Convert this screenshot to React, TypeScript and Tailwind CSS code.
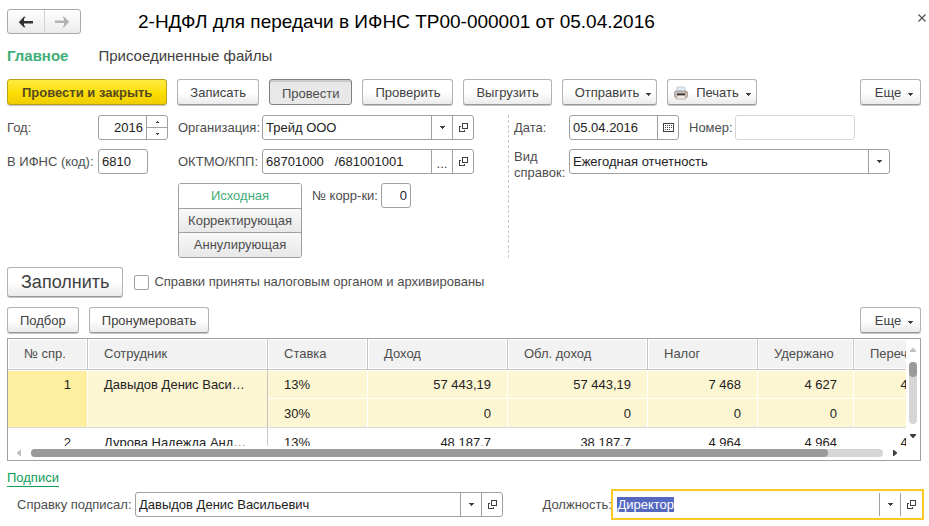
import { useEffect, useRef, type ReactNode } from "react";
import clsx from "clsx";

const BUTTON =
  "flex h-[26px] shrink-0 items-center justify-center rounded-[3px] border border-[#b3b3b3] border-b-[#9a9a9a] bg-linear-to-b from-white from-50% to-[#ebebeb] pt-0.5 whitespace-nowrap text-[#404040] shadow-[0_1px_0_#c4c4c4]";
const FIELD = "flex h-[25px] min-w-0 rounded-[3px] border border-[#a0a0a0] bg-white";
const CELL =
  "flex w-[21px] shrink-0 items-center justify-center border-l border-[#a0a0a0] text-[#404040]";
const INPUT = "h-full w-full min-w-0 bg-transparent px-[3px] text-[#222] outline-none";

function Caret({ className = "" }: { className?: string }) {
  return (
    <svg width="5" height="3" viewBox="0 0 5 3" className={clsx("shrink-0", className)} fill="currentColor" shapeRendering="crispEdges" aria-hidden="true">
      <path d="M0 0h5v1H4v1H3v1H2V2H1V1H0z" />
    </svg>
  );
}

function ScrollArrow({ className = "" }: { className?: string }) {
  return (
    <svg width="6" height="4" viewBox="0 0 6 4" className={clsx("shrink-0", className)} fill="currentColor" aria-hidden="true">
      <path d="M0 0h6v1L3.500 4h-1L0 1z" />
    </svg>
  );
}

function OpenIcon() {
  return (
    <svg width="9" height="9" viewBox="0 0 9 9" fill="none" stroke="currentColor" shapeRendering="crispEdges" aria-hidden="true">
      <path d="M3.5.5h5v5h-5z" />
      <path d="M2 3.5H.5v5h5V7" />
    </svg>
  );
}

function CalendarIcon() {
  return (
    <svg width="11" height="9" viewBox="0 0 11 9" fill="none" stroke="currentColor" shapeRendering="crispEdges" aria-hidden="true">
      <path d="M.5.5h10v8H.5z" />
      <path d="M2 2.500h7M2 4.500h7M2 6.500h5" strokeDasharray="1 1" />
    </svg>
  );
}

function PrinterIcon() {
  return (
    <svg width="14" height="14" viewBox="0 0 14 14" aria-hidden="true">
      <path d="M3 1h7l1 1v4H3z" fill="#dfeaf4" stroke="#a9bccb" strokeWidth=".7" />
      <rect x=".5" y="5" width="13" height="6.5" rx="1.5" fill="#c4bcb8" stroke="#948e8a" strokeWidth=".7" />
      <path d="M3 7.500h8v2H3z" fill="#3a3331" />
      <path d="M3 9.5h8l.5 3.5h-9z" fill="#f2ebe6" stroke="#a79c96" strokeWidth=".7" />
      <path d="M11 6h1.300v1H11z" fill="#d96d3c" />
    </svg>
  );
}

function Arrow({ flip = false }: { flip?: boolean }) {
  return (
    <svg width="14" height="12" viewBox="0 0 14 12" className={flip ? "rotate-180" : ""} fill="currentColor" aria-hidden="true">
      <path d="M0 6l5-5.500V5h9v2.500H5v4L0 6.500z" />
      <path d="M5.200 2.800L6.500 1 5 .4zM5.200 9.200L6.500 11l-1.500.6z" />
    </svg>
  );
}

function Button({ children, menu, className }: { children: ReactNode; menu?: boolean; className?: string }) {
  return (
    <button type="button" className={clsx(BUTTON, menu ? "pr-[5px] pl-3" : "px-3", className)}>
      {children}
      {menu && <Caret className="mt-0.5 ml-[7px]" />}
    </button>
  );
}

function SelectBox({ id, value, open, className }: { id: string; value: string; open?: boolean; className?: string }) {
  return (
    <div className={clsx(FIELD, className)}>
      <div className="grid min-w-0 flex-1 grid-cols-[minmax(0,1fr)_21px]">
        <select id={id} defaultValue={value} className="col-span-2 col-start-1 row-start-1 h-full w-full appearance-none bg-transparent pr-6 pl-[3px] text-[#222] outline-none">
          <option>{value}</option>
        </select>
        <span className={clsx(CELL, "pointer-events-none col-start-2 row-start-1 h-full")}>
          <Caret />
        </span>
      </div>
      {open && (
        <button type="button" aria-label="Открыть" className={CELL}>
          <OpenIcon />
        </button>
      )}
    </div>
  );
}

const HEADERS = ["№ спр.", "Сотрудник", "Ставка", "Доход", "Обл. доход", "Налог", "Удержано", "Перечис"];
const WIDTHS = ["w-[80px]", "w-[180px]", "w-[100px]", "w-[140px]", "w-[140px]", "w-[110px]", "w-[96px]", ""];
const PEOPLE = [
  {
    no: "1",
    name: "Давыдов Денис Васи…",
    selected: true,
    rates: [
      ["13%", "57 443,19", "57 443,19", "7 468", "4 627", "4 627"],
      ["30%", "0", "0", "0", "0", "0"],
    ],
  },
  {
    no: "2",
    name: "Дурова Надежда Анд…",
    selected: false,
    rates: [["13%", "48 187,7", "38 187,7", "4 964", "4 964", "4 964"]],
  },
];

function Employees() {
  return (
    <div className="mt-[5px] border border-[#a0a0a0]">
      <div className="flex">
        <div className="h-[107px] min-w-0 flex-1 overflow-hidden">
          <table className="w-full min-w-[942px] table-fixed border-separate border-spacing-0">
            <thead>
              <tr>
                {HEADERS.map((h, i) => (
                  <th key={h} className={clsx("h-[31px] border-r border-b border-[#c6c6c6] bg-[#f2f2f2] px-4 text-left font-normal text-[#4d4d4d] shadow-[inset_0_0_0_1px_#fff]", WIDTHS[i])}>
                    {h}
                  </th>
                ))}
              </tr>
            </thead>
            <tbody className="text-[#222]">
              {PEOPLE.map((p) =>
                p.rates.map((r, ri) => {
                  const last = ri === p.rates.length - 1;
                  return (
                    <tr key={p.no + r[0]} className={p.selected ? "bg-[#fdf6d2]" : "bg-white"}>
                      {ri === 0 && (
                        <>
                          <td rowSpan={p.rates.length} className={clsx("border-r border-b border-r-white border-b-[#dcdcdc] px-4 pt-[5px] text-right align-top leading-5", p.selected && "bg-[#fdeea0] shadow-[inset_0_1px_0_#fff]")}>
                            {p.no}
                          </td>
                          <td rowSpan={p.rates.length} className={clsx("border-r border-b border-r-[#c6c6c6] border-b-[#dcdcdc] px-4 pt-[5px] align-top leading-5 whitespace-nowrap", p.selected && "shadow-[inset_0_1px_0_#fff]")}>
                            {p.name}
                          </td>
                        </>
                      )}
                      {r.map((v, i) => (
                        <td key={i} className={clsx("h-[29px] border-r border-b border-r-white px-4 pt-[5px] align-top leading-5 whitespace-nowrap", i > 0 && "text-right", last ? "border-b-[#dcdcdc]" : "border-b-white", ri === 0 && "shadow-[inset_0_1px_0_#fff]")}>
                          {v}
                        </td>
                      ))}
                    </tr>
                  );
                }),
              )}
            </tbody>
          </table>
        </div>
        <div className="flex w-[14px] flex-col items-center pt-[9px] pb-[8px]">
          <ScrollArrow className="rotate-180 text-[#c0c0c0]" />
          <div className="mt-[10px] w-2 flex-1 rounded-full bg-[#d6d6d6]">
            <div className="h-[15px] rounded-full bg-[#9a9a9a]" />
          </div>
          <ScrollArrow className="mt-[10px] text-[#404040]" />
        </div>
      </div>
      <div className="flex h-[14px] items-center pr-[22px] pl-[8px]">
        <ScrollArrow className="rotate-90 text-[#c0c0c0]" />
        <div className="mx-[9px] h-2 flex-1 rounded-full bg-[#d6d6d6]">
          <div className="h-2 w-[93.5%] rounded-full bg-[#9a9a9a]" />
        </div>
        <ScrollArrow className="-rotate-90 text-[#404040]" />
      </div>
    </div>
  );
}

export default function App() {
  const post = useRef<HTMLInputElement>(null);
  useEffect(() => {
    post.current?.focus();
    post.current?.select();
  }, []);

  return (
    <main className="bg-white pt-[9px] pr-2 pb-2 pl-[7px] font-['Liberation_Sans',Arial,sans-serif] text-[13px] leading-4 text-[#4d4d4d]">
      <header className="flex h-[25px] items-center">
        <div className="flex h-[25px] w-[74px] rounded-[3px] border border-[#a8a8a8] bg-linear-to-b from-white to-[#ebebeb]">
          <button type="button" aria-label="Назад" className="flex flex-1 items-center justify-center text-[#333]">
            <Arrow />
          </button>
          <button type="button" aria-label="Вперед" className="flex flex-1 items-center justify-center border-l border-[#d2d2d2] text-[#b3b3b3]">
            <Arrow flip />
          </button>
        </div>
        <h1 className="ml-[57px] flex-1 text-[19px] leading-6 whitespace-nowrap text-black">2-НДФЛ для передачи в ИФНС ТР00-000001 от 05.04.2016</h1>
        <button type="button" aria-label="Закрыть" className="-mr-[5px] mb-[7px] text-[#555]">
          <svg width="8" height="8" viewBox="0 0 8 8" fill="none" stroke="currentColor" strokeWidth="1.300" aria-hidden="true">
            <path d="M.5.5l7 7M7.500.5l-7 7" />
          </svg>
        </button>
      </header>

      <nav className="mt-3 flex h-5 items-center gap-[30px] text-[15px] leading-5">
        <a href="#main" className="font-bold text-[#3fae78]">Главное</a>
        <a href="#files" className="text-[#404040]">Присоединенные файлы</a>
      </nav>

      <div className="mt-[13px] flex gap-[10px]">
        <button type="button" className="flex h-[26px] shrink-0 items-center justify-center rounded-[3px] border border-[#b89f1c] bg-linear-to-b from-[#ffea3c] via-[#fddf05] to-[#efcd00] px-[14px] pt-0.5 font-bold whitespace-nowrap text-[#55491f] shadow-[0_1px_0_#c4c4c4]">
          Провести и закрыть
        </button>
        <Button>Записать</Button>
        <button type="button" aria-pressed="true" className="flex h-[26px] shrink-0 items-center justify-center rounded-[3px] border border-[#808080] bg-[#e8e8e8] px-3 pt-[3px] whitespace-nowrap text-[#4d4d4d] shadow-[inset_0_2px_0_#cbcbcb]">
          Провести
        </button>
        <Button>Проверить</Button>
        <Button>Выгрузить</Button>
        <Button menu>Отправить</Button>
        <Button menu>
          <span className="mr-2 -ml-1.5"><PrinterIcon /></span>
          Печать
        </Button>
        <Button menu className="ml-auto w-[61px]">Еще</Button>
      </div>

      <form className="mt-[10px] grid grid-cols-[171px_minmax(0,330fr)_minmax(0,413fr)]">
        <div className="flex flex-col gap-[9px]">
          <div className="flex items-center">
            <label htmlFor="year" className="w-[91px]">Год:</label>
            <div className={clsx(FIELD, "w-[70px]")}>
              <input id="year" defaultValue="2016" className={clsx(INPUT, "text-right")} />
              <div className="flex w-[21px] shrink-0 flex-col border-l border-[#a0a0a0] text-[#404040]">
                <button type="button" aria-label="Больше" className="flex flex-1 items-center justify-center border-b border-[#a0a0a0]">
                  <svg width="3" height="2" viewBox="0 0 3 2" fill="currentColor" shapeRendering="crispEdges"><path d="M1 0h1v1h1v1H0V1h1z" /></svg>
                </button>
                <button type="button" aria-label="Меньше" className="flex flex-1 items-center justify-center">
                  <svg width="3" height="2" viewBox="0 0 3 2" fill="currentColor" shapeRendering="crispEdges"><path d="M0 0h3v1H2v1H1V1H0z" /></svg>
                </button>
              </div>
            </div>
          </div>
          <div className="flex items-center">
            <label htmlFor="ifns" className="w-[91px]">В ИФНС (код):</label>
            <div className={clsx(FIELD, "w-[50px]")}>
              <input id="ifns" defaultValue="6810" className={INPUT} />
            </div>
          </div>
        </div>

        <div className="flex flex-col gap-[9px] pr-[34px]">
          <div className="flex items-center">
            <label htmlFor="org" className="w-[84px] shrink-0">Организация:</label>
            <SelectBox id="org" value="Трейд ООО" open className="flex-1" />
          </div>
          <div className="flex items-center">
            <label htmlFor="oktmo" className="w-[84px] shrink-0">ОКТМО/КПП:</label>
            <div className={clsx(FIELD, "flex-1")}>
              <input id="oktmo" defaultValue={"68701000\u00a0\u00a0\u00a0/681001001"} className={INPUT} />
              <button type="button" aria-label="Выбрать" className={clsx(CELL, "pt-1")}>...</button>
              <button type="button" aria-label="Открыть" className={CELL}>
                <OpenIcon />
              </button>
            </div>
          </div>
          <div className="flex items-start">
            <div className="flex h-[75px] w-[124px] shrink-0 flex-col divide-y divide-[#a0a0a0] overflow-hidden rounded-[3px] border border-[#a0a0a0]">
              <button type="button" aria-pressed="true" className="flex-1 bg-white text-[#3fae78]">Исходная</button>
              <button type="button" className="flex-1 bg-linear-to-b from-[#f8f8f8] to-[#e8e8e8]">Корректирующая</button>
              <button type="button" className="flex-1 bg-linear-to-b from-[#f8f8f8] to-[#e8e8e8]">Аннулирующая</button>
            </div>
            <label htmlFor="corr" className="ml-[10px] w-[69px] shrink-0 leading-[25px] whitespace-nowrap">№ корр-ки:</label>
            <div className={clsx(FIELD, "w-[30px]")}>
              <input id="corr" defaultValue="0" className={clsx(INPUT, "text-right")} />
            </div>
          </div>
        </div>

        <div className="flex flex-col gap-[9px] border-l border-dashed border-[#c8c8c8] pr-[31px] pl-[5px]">
          <div className="flex items-center">
            <label htmlFor="date" className="w-[55px] shrink-0">Дата:</label>
            <div className={clsx(FIELD, "w-[110px]")}>
              <input id="date" defaultValue="05.04.2016" className={INPUT} />
              <button type="button" aria-label="Календарь" className={CELL}>
                <CalendarIcon />
              </button>
            </div>
            <label htmlFor="number" className="ml-[10px] w-[46px] shrink-0">Номер:</label>
            <div className="flex h-[25px] w-[120px] min-w-0 rounded-[3px] border border-[#d6d6d6]">
              <input id="number" defaultValue="" className={INPUT} />
            </div>
          </div>
          <div className="flex items-start">
            <label htmlFor="kind" className="w-[55px] shrink-0">Вид справок:</label>
            <SelectBox id="kind" value="Ежегодная отчетность" className="flex-1" />
          </div>
        </div>
      </form>

      <div className="mt-[9px] flex items-center">
        <button type="button" className="flex h-[30px] shrink-0 items-center rounded-[3px] border border-[#b3b3b3] border-b-[#9a9a9a] bg-linear-to-b from-white from-50% to-[#ebebeb] px-[13px] text-[18px] leading-6 text-[#404040] shadow-[0_1px_0_#c4c4c4]">
          Заполнить
        </button>
        <label className="ml-[11px] flex items-center gap-[5px]">
          <input type="checkbox" className="size-[15px] appearance-none rounded-[2px] border border-[#a0a0a0] bg-white" />
          Справки приняты налоговым органом и архивированы
        </label>
      </div>

      <div className="mt-[10px] flex gap-[10px]">
        <Button>Подбор</Button>
        <Button>Пронумеровать</Button>
        <Button menu className="ml-auto w-[61px]">Еще</Button>
      </div>

      <Employees />

      <section className="mt-[9px]">
        <a href="#signatures" className="inline-block border-b border-[#0f9d58] leading-4 text-[#0f9d58]">Подписи</a>
        <div className="mt-[5px] flex items-center pl-[10px]">
          <label htmlFor="signer" className="w-[118px] shrink-0">Справку подписал:</label>
          <SelectBox id="signer" value="Давыдов Денис Васильевич" open className="flex-[367_1_0%]" />
          <label htmlFor="post" className="ml-[39px] w-[72px] shrink-0">Должность:</label>
          <div className="flex h-[25px] min-w-0 flex-[307_1_0%] bg-white py-px outline-2 outline-offset-[1px] outline-[#fbc926]">
            <input id="post" ref={post} defaultValue="Директор" className={clsx(INPUT, "selection:bg-[#5468c0] selection:text-white")} />
            <button type="button" aria-label="Выбрать" className={CELL}>
              <Caret />
            </button>
            <button type="button" aria-label="Открыть" className={CELL}>
              <OpenIcon />
            </button>
          </div>
        </div>
      </section>
    </main>
  );
}
